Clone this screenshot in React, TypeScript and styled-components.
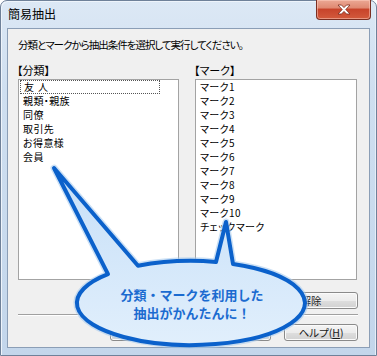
import styled, { createGlobalStyle } from 'styled-components'

const GlobalStyle = createGlobalStyle`
  html, body {
    margin: 0;
    padding: 0;
    background: #ffffff;
  }
  body {
    font-family: "Noto Sans CJK JP", "Noto Sans", sans-serif;
    color: #000;
  }
`

const categories = ['友人', '親類・親族', '同僚', '取引先', 'お得意様', '会員']
const marks = [
    'マーク1', 'マーク2', 'マーク3', 'マーク4', 'マーク5', 'マーク6',
    'マーク7', 'マーク8', 'マーク9', 'マーク10', 'チェックマーク',
]

const bubblePath =
    'M108 274.2 L54 168 L138 265.8 A114 42 0 0 1 216 261.9 L226 222 L233 264 A114 42 0 1 1 108 274.2 Z'

export default function App() {
    return (
        <>
            <GlobalStyle />
            <Window>
                <TitleBar>
                    <Title>簡易抽出</Title>
                    <CloseButton>
                        <svg width="16" height="11" viewBox="0 0 16 11">
                            <path
                                d="M2 1 L5.5 1 L8 3.6 L10.5 1 L14 1 L9.8 5.5 L14 10 L10.5 10 L8 7.4 L5.5 10 L2 10 L6.2 5.5 Z"
                                fill="#ffffff"
                                stroke="#7a2a1c"
                                strokeWidth="0.8"
                                strokeLinejoin="round"
                            />
                        </svg>
                    </CloseButton>
                </TitleBar>
                <Client>
                    <Instruction>分類とマークから抽出条件を選択して実行してください。</Instruction>
                    <Columns>
                        <Column>
                            <Label>【分類】</Label>
                            <ListBox>
                                {categories.map((c, i) => (
                                    <Item key={c} $focused={i === 0}>{c}</Item>
                                ))}
                            </ListBox>
                        </Column>
                        <Column>
                            <Label>【マーク】</Label>
                            <ListBox>
                                {marks.map(m => (
                                    <Item key={m}>{m}</Item>
                                ))}
                            </ListBox>
                        </Column>
                    </Columns>
                    <ButtonRow $top={12}>
                        <Button $width={94}>解除</Button>
                    </ButtonRow>
                    <Separator />
                    <ButtonRow $top={8}>
                        <Button $width={74}>実行</Button>
                        <Button $width={74}>閉じる</Button>
                        <Button $width={74}>ヘルプ(<u>H</u>)</Button>
                    </ButtonRow>
                </Client>
                <Callout>
                    <svg width="377" height="356" viewBox="0 0 377 356">
                        <defs>
                            <linearGradient id="bubbleFill" x1="0" y1="0" x2="0" y2="1">
                                <stop offset="0" stopColor="#c6dff8" />
                                <stop offset="1" stopColor="#e1effc" />
                            </linearGradient>
                        </defs>
                        <path
                            d={bubblePath}
                            fill="none"
                            stroke="#a9cbef"
                            strokeWidth="7"
                            strokeLinejoin="round"
                            opacity="0.6"
                        />
                        <path
                            d={bubblePath}
                            fill="url(#bubbleFill)"
                            stroke="#0b61cb"
                            strokeWidth="4"
                            strokeLinejoin="round"
                        />
                    </svg>
                    <CalloutText>
                        分類・マークを利用した
                        <br />
                        抽出がかんたんに！
                    </CalloutText>
                </Callout>
            </Window>
        </>
    )
}

const Window = styled.div`
    position: relative;
    box-sizing: border-box;
    width: 377px;
    height: 356px;
    display: flex;
    flex-direction: column;
    padding: 0 6px 7px 6px;
    border: 1px solid #6f8199;
    border-radius: 7px 7px 0 0;
    background: linear-gradient(to bottom, #dce8f5 0%, #cfdff0 25%, #c3d6eb 100%);
    box-shadow: inset 1px 1px 0 #eef4fb, inset -1px 0 0 #e6eef8;
`

const TitleBar = styled.div`
    display: flex;
    justify-content: space-between;
    align-items: flex-start;
    height: 27px;
`

const Title = styled.div`
    padding: 6px 0 0 1px;
    font-size: 12px;
    line-height: 14px;
    color: #000;
`

const CloseButton = styled.div`
    box-sizing: border-box;
    width: 55px;
    height: 20px;
    margin: -1px -1px 0 0;
    display: flex;
    align-items: center;
    justify-content: center;
    border: 1px solid #7b2f22;
    border-top: none;
    border-radius: 0 0 4px 4px;
    background: linear-gradient(to bottom, #eba895 0%, #e08a73 40%, #c8442b 50%, #d35a3c 100%);
    box-shadow: inset 0 0 0 1px rgba(255, 210, 195, 0.5);
`

const Client = styled.div`
    flex: 1;
    display: flex;
    flex-direction: column;
    border: 1px solid #8b9eb6;
    background: #f0f0f0;
    padding: 9px 11px 0 10px;
`

const Instruction = styled.div`
    font-size: 10.5px;
    line-height: 14px;
    letter-spacing: -1px;
    font-feature-settings: "palt";
    white-space: nowrap;
`

const Columns = styled.div`
    display: grid;
    grid-template-columns: 161px 162px;
    column-gap: 16px;
    margin-top: 11px;
`

const Column = styled.div`
    display: flex;
    flex-direction: column;
`

const Label = styled.div`
    font-size: 11px;
    line-height: 14px;
    margin: 0 0 2px -1px;
    font-feature-settings: "palt";
`

const ListBox = styled.div`
    height: 201px;
    box-sizing: border-box;
    border: 1px solid #a3a3a3;
    background: #ffffff;
    display: flex;
    flex-direction: column;
`

const Item = styled.div<{ $focused?: boolean }>`
    box-sizing: border-box;
    height: 14px;
    line-height: 14px;
    padding-left: 4px;
    width: ${p => (p.$focused ? '140px' : 'auto')};
    margin-left: ${p => (p.$focused ? 1 : 0)}px;
    outline: ${p => (p.$focused ? '1px dotted #555' : 'none')};
    outline-offset: -1px;
    font-size: 10px;
    letter-spacing: ${p => (p.$focused ? 4 : 0.4)}px;
    font-feature-settings: "palt";
    white-space: nowrap;
`

const ButtonRow = styled.div<{ $top: number }>`
    display: flex;
    justify-content: flex-end;
    gap: 13px;
    margin-top: ${p => p.$top}px;
`

const Button = styled.div<{ $width: number }>`
    box-sizing: border-box;
    width: ${p => p.$width}px;
    height: 17px;
    display: flex;
    align-items: center;
    justify-content: center;
    border: 1px solid #8a8a8a;
    border-radius: 3px;
    background: linear-gradient(to bottom, #f4f4f4 0%, #ececec 50%, #dedede 51%, #d2d2d2 100%);
    box-shadow: inset 0 0 0 1px #fbfbfb;
    font-size: 10.5px;
    line-height: 13px;
    color: #1a1a1a;
    font-feature-settings: "palt";

    u {
        text-decoration: underline;
    }
`

const Separator = styled.div`
    margin-top: 5px;
    height: 0;
    border-top: 1px solid #a0a0a0;
    border-bottom: 1px solid #ffffff;
`

const Callout = styled.div`
    position: absolute;
    left: -1px;
    top: -1px;
    width: 377px;
    height: 356px;
    pointer-events: none;

    svg {
        position: absolute;
        left: 0;
        top: 0;
    }
`

const CalloutText = styled.div`
    position: absolute;
    left: 77px;
    top: 286px;
    width: 230px;
    text-align: center;
    font-size: 13px;
    line-height: 18px;
    font-weight: 700;
    color: #1b6bd0;
`
